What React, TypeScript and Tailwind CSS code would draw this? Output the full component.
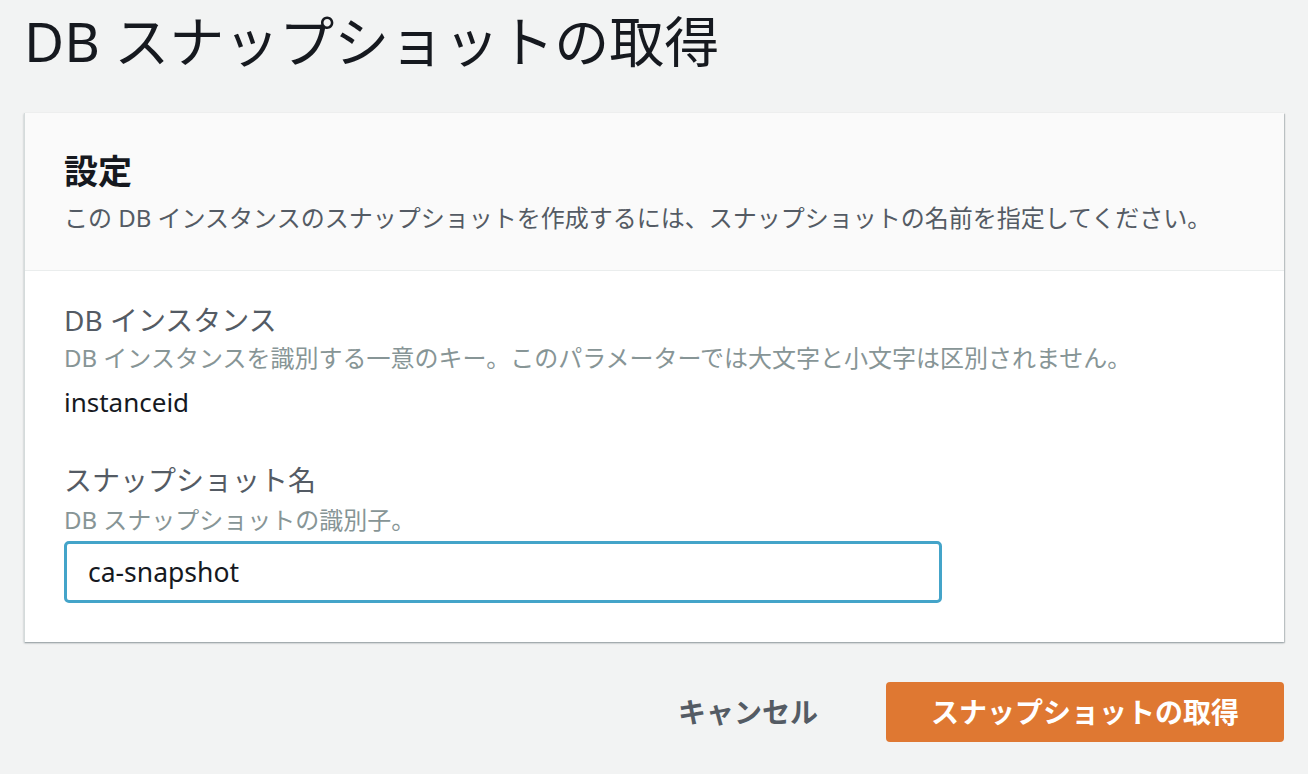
import React, { useState } from 'react';

export default function App() {
  const [name, setName] = useState('ca-snapshot');

  return (
    <main
      className="min-h-screen bg-[#f2f3f3] px-6 pt-[3px] pb-10 text-[#16191f]"
      style={{ fontFamily: '"Noto Sans", "Noto Sans CJK JP", sans-serif' }}
    >
      <h1 className="text-[55px] leading-[76px] font-normal">DB スナップショットの取得</h1>

      <section className="mt-[34px] bg-white border-l border-[#d5dbdb] shadow-[0_1px_2px_0_rgba(0,28,36,0.3),1px_1px_1px_0_rgba(0,28,36,0.15)]">
        <div className="bg-[#fafafa] border-b border-[#eaeded] pl-[39px] pr-10 pt-9 pb-9">
          <h2 className="text-[34px] leading-[44px] font-bold">設定</h2>
          <p className="mt-[9px] text-[24px] leading-8 text-[#545b64]">
            この DB インスタンスのスナップショットを作成するには、スナップショットの名前を指定してください。
          </p>
        </div>

        <div className="pl-[39px] pr-10 pt-[31px] pb-[39px]">
          <div>
            <div className="text-[28px] leading-9 text-[#545b64]">DB インスタンス</div>
            <div className="mt-[5px] text-[24px] leading-[30px] text-[#879596]">
              DB インスタンスを識別する一意のキー。このパラメーターでは大文字と小文字は区別されません。
            </div>
            <div className="mt-[13px] text-[26px] leading-8 text-[#16191f]">instanceid</div>
          </div>

          <div className="mt-[44px]">
            <div className="text-[28px] leading-9 text-[#545b64]">スナップショット名</div>
            <div className="mt-[7px] text-[24px] leading-[30px] text-[#879596]">DB スナップショットの識別子。</div>
            <input
              autoFocus
              value={name}
              onChange={(e) => setName(e.target.value)}
              className="mt-[6px] block w-[878px] h-[62px] rounded-[5px] border-[3px] border-[#44a4c9] bg-white pl-[21px] pr-4 text-[26.5px] text-[#16191f] caret-[#16191f] outline-none"
            />
          </div>
        </div>
      </section>

      <div className="mt-10 flex items-center justify-end gap-[68px]">
        <button className="text-[28px] font-bold text-[#545b64]">キャンセル</button>
        <button className="h-[60px] w-[398px] rounded-[4px] bg-[#df7832] text-[28px] font-bold text-white">
          スナップショットの取得
        </button>
      </div>
    </main>
  );
}
